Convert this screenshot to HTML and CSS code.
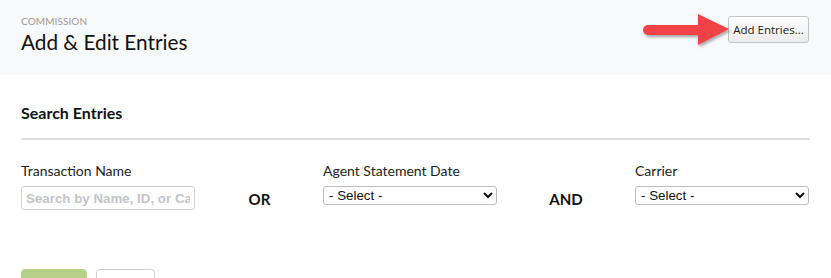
FILE: index.html
```html
<!DOCTYPE html>
<html>
<head>
<meta charset="utf-8">
<link rel="stylesheet" href="styles.css">
</head>
<body>
<header class="page-header">
  <div class="title-block">
    <div class="eyebrow">COMMISSION</div>
    <h1 class="title">Add &amp; Edit Entries</h1>
  </div>
  <div class="action">
    <svg class="arrow" width="96" height="40" viewBox="0 0 96 40" aria-hidden="true">
      <defs>
        <filter id="sh" x="-20%" y="-30%" width="140%" height="160%">
          <feDropShadow dx="1.5" dy="2" stdDeviation="1.5" flood-color="#000" flood-opacity="0.35"/>
        </filter>
      </defs>
      <g filter="url(#sh)" fill="#f04346">
        <path d="M7 11 L60 11 L60 21 L7 21 A5 5 0 0 1 7 11 Z"/>
        <path d="M57 0 L88 15 L57 31 Z"/>
      </g>
    </svg>
    <button class="btn-add">Add Entries...</button>
  </div>
</header>
<main class="content">
  <h2 class="section-title">Search Entries</h2>
  <div class="filters">
    <div class="field f1">
      <label class="label">Transaction Name</label>
      <input class="text-input" type="text" placeholder="Search by Name, ID, or Carrier">
    </div>
    <div class="connector c1">OR</div>
    <div class="field f2">
      <label class="label">Agent Statement Date</label>
      <select class="select"><option>- Select -</option></select>
    </div>
    <div class="connector c2">AND</div>
    <div class="field f3">
      <label class="label">Carrier</label>
      <select class="select"><option>- Select -</option></select>
    </div>
  </div>
  <div class="buttons">
    <button class="btn-search">Search</button>
    <button class="btn-clear">Clear</button>
  </div>
</main>
</body>
</html>
```
FILE: styles.css
```css
* { box-sizing: border-box; }
html, body { margin: 0; padding: 0; }
body {
  width: 831px;
  height: 278px;
  overflow: hidden;
  background: #fff;
  font-family: Lato, "Noto Sans", sans-serif;
  color: #111;
}
.page-header {
  height: 75px;
  background: #f8f9fb;
  display: flex;
  justify-content: space-between;
  align-items: flex-start;
  padding: 0 22px 0 21px;
}
.title-block { padding-top: 14px; }
.eyebrow {
  font-size: 10px;
  line-height: 14px;
  color: #9a9a9a;
  letter-spacing: 0.1px;
}
.title {
  margin: 2px 0 0;
  font-size: 20.75px;
  line-height: 25px;
  font-weight: 400;
  color: #111;
}
.action {
  position: relative;
  padding-top: 16px;
}
.arrow {
  position: absolute;
  left: -87px;
  top: 14px;
}
.btn-add {
  height: 27px;
  width: 81px;
  padding: 0;
  font-family: "Open Sans", sans-serif;
  font-size: 11.5px;
  color: #1a1a1a;
  background: linear-gradient(#ffffff, #ececec);
  border: 1px solid #c4c4c4;
  border-radius: 3px;
}
.content {
  padding: 0 21px;
}
.section-title {
  margin: 0;
  padding-top: 28px;
  padding-bottom: 16px;
  font-size: 16px;
  line-height: 19px;
  font-weight: 700;
  border-bottom: 2px solid #dedede;
}
.filters {
  display: flex;
  align-items: flex-end;
  padding-top: 22px;
}
.field { display: flex; flex-direction: column; }
.f1 { width: 175px; }
.f2, .f3 { width: 174px; }
.label {
  font-size: 14px;
  line-height: 17px;
  color: #222;
  margin-bottom: 7px;
}
.text-input {
  width: 174px;
  height: 24px;
  border: 1px solid #cfcfcf;
  border-radius: 3px;
  padding: 0 4px;
  font-family: "Liberation Sans", Arial, sans-serif;
  font-size: 13.33px;
  font-weight: 700;
  margin-top: 0;
}
.text-input::placeholder { color: #c4c4c4; }
.select {
  width: 174px;
  height: 19px;
  margin-bottom: 5px;
  font-family: "Liberation Sans", Arial, sans-serif;
  font-size: 13.33px;
  color: #111;
  border: 1px solid #bdbdbd;
  border-radius: 3px;
  background: #fff;
  padding: 0 0 0 1px;
}
.connector {
  text-align: center;
  font-size: 15px;
  font-weight: 700;
  line-height: 18px;
  padding-bottom: 2px;
  color: #111;
}
.c1 { width: 127px; }
.c2 { width: 138px; }
.buttons {
  display: flex;
  gap: 9px;
  padding-top: 59px;
}
.btn-search {
  width: 66px;
  height: 30px;
  background: #b6d08a;
  border: 1px solid #b6d08a;
  border-radius: 4px;
  color: #fff;
  font-family: Lato, sans-serif;
  font-size: 13px;
}
.btn-clear {
  width: 59px;
  height: 30px;
  background: #fff;
  border: 1px solid #cfcfcf;
  border-radius: 4px;
  color: #555;
  font-family: Lato, sans-serif;
  font-size: 13px;
}
```
